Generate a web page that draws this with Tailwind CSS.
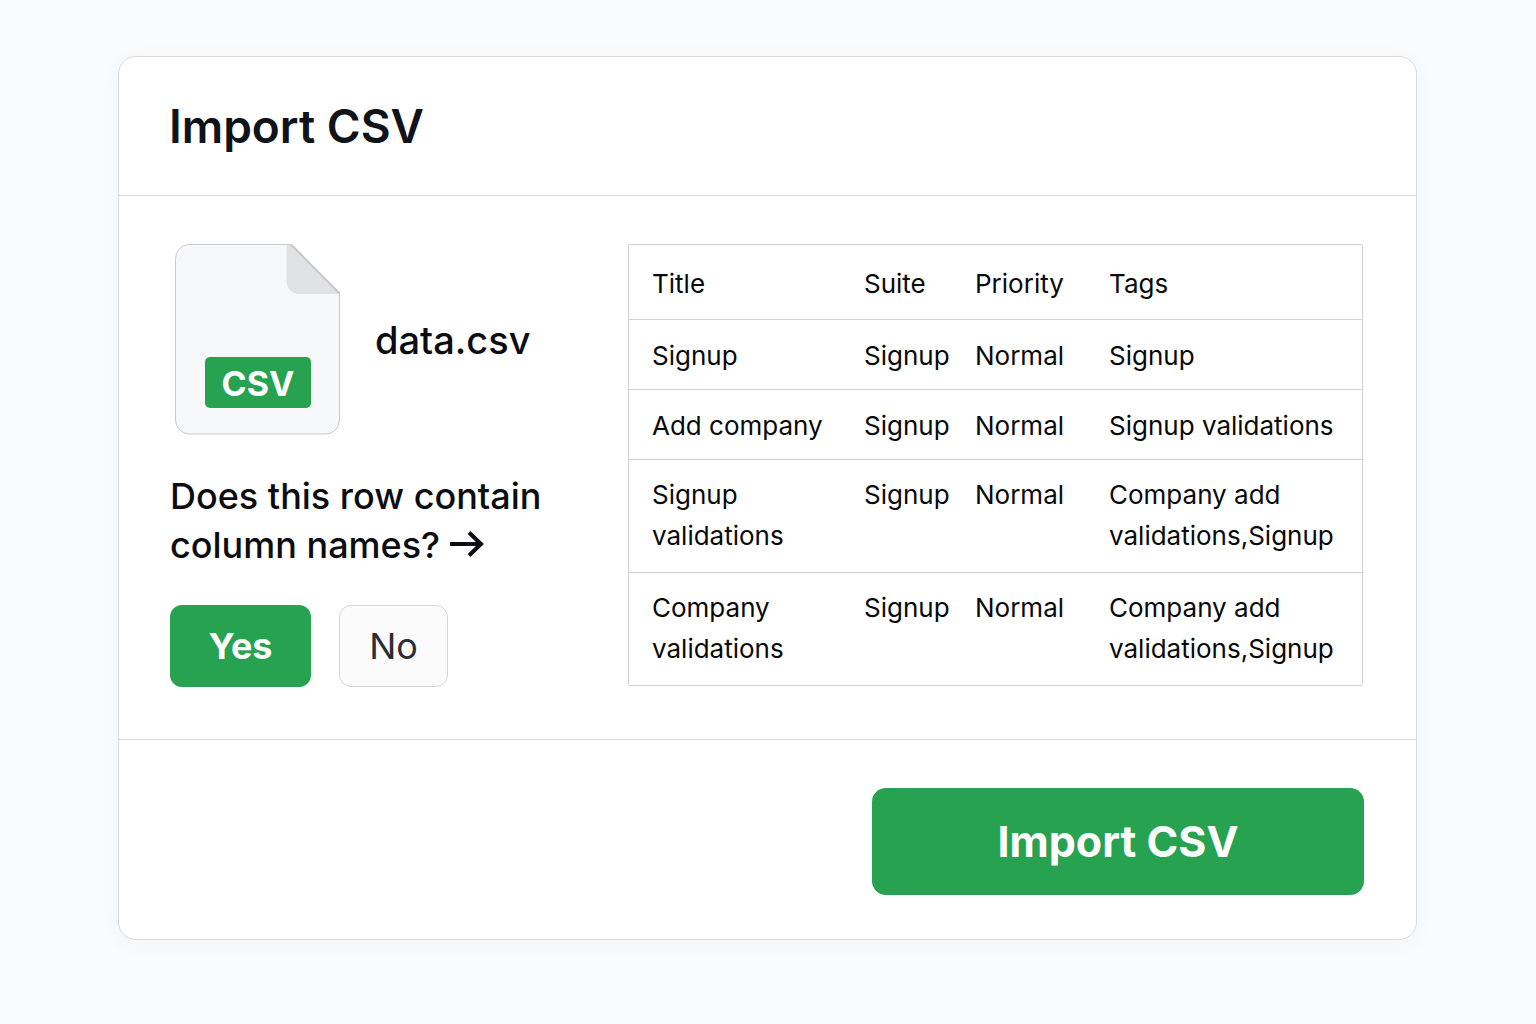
<!DOCTYPE html>
<html lang="en">
<head>
  <meta charset="UTF-8" />
  <meta name="viewport" content="width=device-width, initial-scale=1.0"/>
  <title>Import CSV</title>
  <script src="https://cdn.jsdelivr.net/npm/@tailwindcss/browser@4"></script>
</head>
<body class="bg-[#fafbfd] text-[#0b0d12] font-['Inter','Liberation_Sans',sans-serif] min-h-screen pl-[118px] pr-[119px] py-14">

  <main class="bg-white border border-[#d8dadd] rounded-[18px] shadow-[0_4px_24px_rgba(15,23,42,0.03)]">

    <header class="px-[50px] py-9 border-b border-[#d8dadd]">
      <h1 class="text-[46px] leading-[66px] font-semibold text-[#10131a]">Import CSV</h1>
    </header>

    <div class="flex items-start justify-between gap-8 pl-[51px] pr-[53px] pt-12 pb-[52px]">

      <section class="flex-1">
        <div class="flex items-center gap-[34px] pl-[5px]">
          <!-- file icon -->
          <svg class="w-[166px] h-[191px] shrink-0" viewBox="0 0 166 191" role="img" aria-label="CSV file">
            <path d="M14 .5H116L164.500 49.500V176a14 14 0 0 1-14 14H14.500a14 14 0 0 1-14-14V14.500A14 14 0 0 1 14 .5Z" fill="#f7f8f9" stroke="#c9cacd"/>
            <path d="M111.500 1H116.500L164 50H124a12.500 12.500 0 0 1-12.500-12.500Z" fill="#e1e2e4"/>
            <path d="M116 .5L164.500 49.500" stroke="#c6c7ca" stroke-width="2"/>
            <rect x="30" y="113" width="106" height="51" rx="5" fill="#27a251"/>
            <text x="83" y="152" text-anchor="middle" font-size="34" font-weight="700" fill="#fff">CSV</text>
          </svg>
          <p class="text-[38px] leading-[48px] font-medium">data.csv</p>
        </div>

        <p id="question" class="mt-[37px] text-[36px] leading-[49px] font-medium">
          Does this row contain<br>column names?
          <svg class="inline w-[34px] h-[26px] align-[1px]" viewBox="0 0 34 26" fill="none" stroke="currentColor" stroke-width="4" aria-hidden="true">
            <path d="M0 13H31M19 1.500L31 13L19 24.500"/>
          </svg>
        </p>

        <div class="flex gap-7 mt-[35px]" role="group" aria-labelledby="question">
          <button type="button" class="w-[141px] h-[82px] rounded-xl bg-[#27a251] hover:bg-[#208a44] text-white text-[36px] font-bold cursor-pointer">Yes</button>
          <button type="button" class="w-[109px] h-[82px] rounded-xl bg-[#fbfbfc] hover:bg-gray-100 border border-[#d5d7da] text-[#2c2e33] text-[36px] cursor-pointer">No</button>
        </div>
      </section>

      <div class="w-[735px] border border-[#d0d2d5] rounded-xs">
        <table class="w-full table-fixed text-left text-[26px] leading-[41px] text-[#08090b]">
          <thead>
            <tr class="align-top">
              <th class="w-[211px] pl-[23px] pt-[18px] pb-[15px] font-normal">Title</th>
              <th class="w-[111px] pl-6 pt-[18px] pb-[15px] font-normal">Suite</th>
              <th class="w-[134px] pl-6 pt-[18px] pb-[15px] font-normal">Priority</th>
              <th class="pl-6 pt-[18px] pb-[15px] font-normal">Tags</th>
            </tr>
          </thead>
          <tbody>
            <tr class="border-t border-[#d0d2d5] align-top">
              <td class="pl-[23px] pt-[15px] pb-[13px]">Signup</td>
              <td class="pl-6 pt-[15px] pb-[13px]">Signup</td>
              <td class="pl-6 pt-[15px] pb-[13px]">Normal</td>
              <td class="pl-6 pt-[15px] pb-[13px]">Signup</td>
            </tr>
            <tr class="border-t border-[#d0d2d5] align-top">
              <td class="pl-[23px] pt-[15px] pb-[13px]">Add company</td>
              <td class="pl-6 pt-[15px] pb-[13px]">Signup</td>
              <td class="pl-6 pt-[15px] pb-[13px]">Normal</td>
              <td class="pl-6 pt-[15px] pb-[13px]">Signup validations</td>
            </tr>
            <tr class="border-t border-[#d0d2d5] align-top">
              <td class="pl-[23px] pt-3.5 pb-4">Signup validations</td>
              <td class="pl-6 pt-3.5 pb-4">Signup</td>
              <td class="pl-6 pt-3.5 pb-4">Normal</td>
              <td class="pl-6 pt-3.5 pb-4">Company add validations,Signup</td>
            </tr>
            <tr class="border-t border-[#d0d2d5] align-top">
              <td class="pl-[23px] pt-3.5 pb-4">Company validations</td>
              <td class="pl-6 pt-3.5 pb-4">Signup</td>
              <td class="pl-6 pt-3.5 pb-4">Normal</td>
              <td class="pl-6 pt-3.5 pb-4">Company add validations,Signup</td>
            </tr>
          </tbody>
        </table>
      </div>
    </div>

    <footer class="flex justify-end border-t border-[#d8dadd] pl-[50px] pr-[52px] pt-12 pb-11">
      <button type="submit" class="w-[492px] h-[107px] rounded-[14px] bg-[#27a251] hover:bg-[#208a44] text-white text-[43px] font-bold cursor-pointer">Import CSV</button>
    </footer>
  </main>

</body>
</html>
